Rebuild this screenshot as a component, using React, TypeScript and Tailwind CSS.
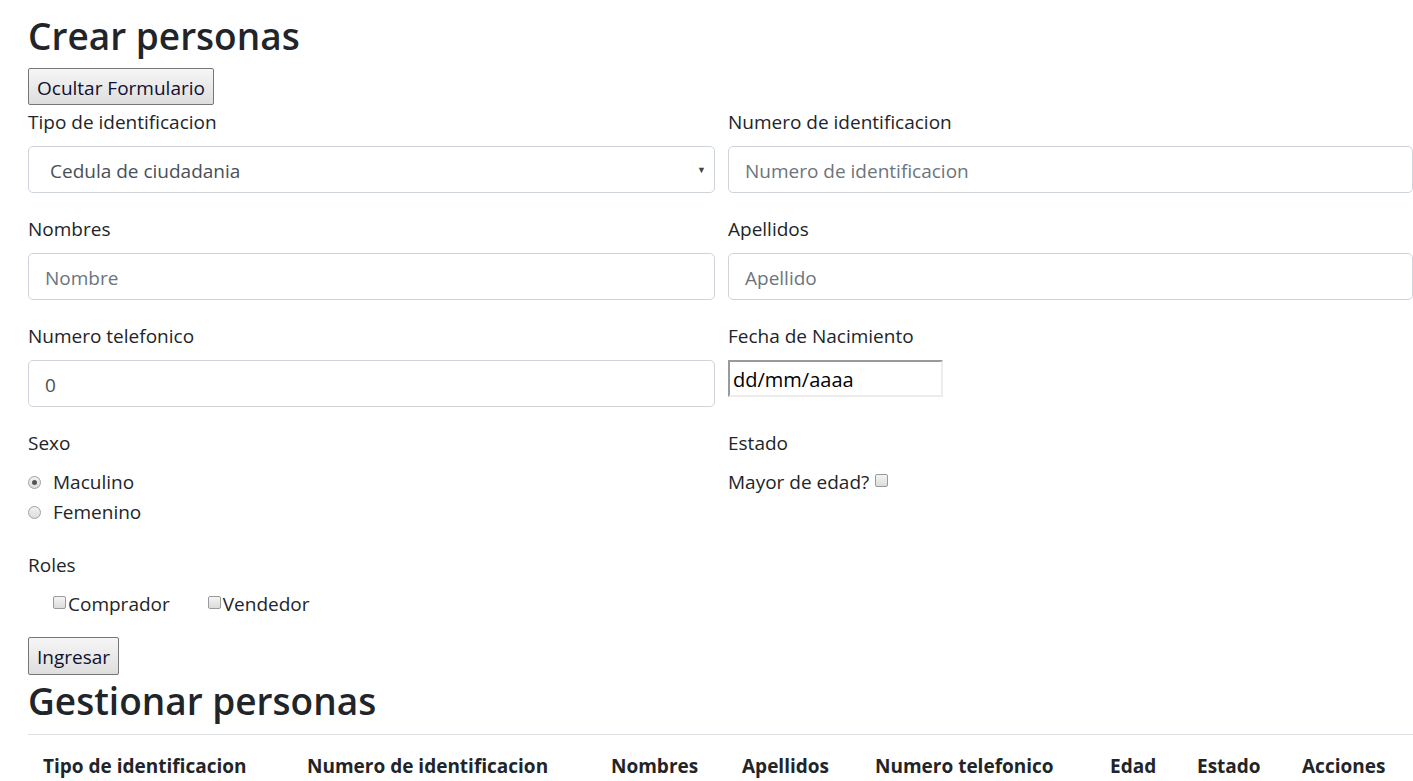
import React from "react";

const font = { fontFamily: '"Open Sans", "Noto Sans", sans-serif' };

const Label = ({ children }: { children: React.ReactNode }) => (
  <div className="h-6 leading-6 text-[19px] text-[#212529] mb-3">{children}</div>
);

const TextBox = ({ children, placeholder }: { children?: React.ReactNode; placeholder?: boolean }) => (
  <div
    className={`h-[47px] border border-[#ced4da] rounded-[5px] bg-white flex items-center pl-4 pt-[3px] text-[19px] ${
      placeholder ? "text-[#6c757d]" : "text-[#495057]"
    }`}
  >
    {children}
  </div>
);

const OldButton = ({ children, tall }: { children: React.ReactNode; tall?: boolean }) => (
  <button
    className={`${
      tall ? "h-[38px]" : "h-[37px]"
    } px-[8px] pt-[3px] border border-[#767676] rounded-[2px] bg-gradient-to-b from-[#f6f6f6] to-[#dedede] text-[19px] text-[#101030] leading-none`}
  >
    {children}
  </button>
);

const Radio = ({ checked }: { checked?: boolean }) => (
  <span className="inline-flex w-[13px] h-[13px] rounded-full border border-[#a0a0a0] bg-gradient-to-b from-[#f2f2f2] to-[#dcdcdc] items-center justify-center mr-[12px]">
    {checked && <span className="w-[5px] h-[5px] rounded-full bg-[#555]" />}
  </span>
);

const Check = () => (
  <span className="inline-block w-[13px] h-[13px] rounded-[2px] border border-[#9a9a9a] bg-gradient-to-b from-[#f4f4f4] to-[#dcdcdc]" />
);

const columns = [
  { name: "Tipo de identificacion", w: 264 },
  { name: "Numero de identificacion", w: 304 },
  { name: "Nombres", w: 131 },
  { name: "Apellidos", w: 133 },
  { name: "Numero telefonico", w: 235 },
  { name: "Edad", w: 87 },
  { name: "Estado", w: 105 },
  { name: "Acciones", w: 126 },
];

export default function App() {
  return (
    <div style={font} className="w-[1413px] h-[781px] overflow-hidden bg-white text-[#212529] pl-[28px] pt-[12px]">
      <h1 className="text-[37px] leading-[48px] font-semibold mb-2">Crear personas</h1>
      <OldButton>Ocultar Formulario</OldButton>

      <div className="grid grid-cols-[687px_685px] gap-x-[13px] mt-[5px]">
        <div className="mb-6">
          <Label>Tipo de identificacion</Label>
          <div className="relative">
            <TextBox>
              <span className="pl-[5px] text-[#495057]">Cedula de ciudadania</span>
            </TextBox>
            <span className="absolute right-[9px] top-[17px] text-[9px] text-[#444]">▼</span>
          </div>
        </div>
        <div className="mb-6">
          <Label>Numero de identificacion</Label>
          <TextBox placeholder>Numero de identificacion</TextBox>
        </div>

        <div className="mb-6">
          <Label>Nombres</Label>
          <TextBox placeholder>Nombre</TextBox>
        </div>
        <div className="mb-6">
          <Label>Apellidos</Label>
          <TextBox placeholder>Apellido</TextBox>
        </div>

        <div className="mb-6">
          <Label>Numero telefonico</Label>
          <TextBox>0</TextBox>
        </div>
        <div className="mb-6">
          <Label>Fecha de Nacimiento</Label>
          <div className="w-[215px] h-[37px] border-2 border-t-[#9a9a9a] border-l-[#9a9a9a] border-b-[#ececec] border-r-[#ececec] flex items-center pl-[3px] pt-[2px] text-[20px] text-black">
            dd/mm/aaaa
          </div>
        </div>

        <div>
          <Label>Sexo</Label>
          <div className="flex flex-col text-[19px] leading-[30px]">
            <div className="flex items-center">
              <Radio checked />
              Maculino
            </div>
            <div className="flex items-center">
              <Radio />
              Femenino
            </div>
          </div>
        </div>
        <div>
          <Label>Estado</Label>
          <div className="flex items-center text-[19px] leading-[30px]">
            Mayor de edad?
            <span className="ml-[6px] -mt-[4px] flex">
              <Check />
            </span>
          </div>
        </div>
      </div>

      <div className="mt-[26px]">
        <Label>Roles</Label>
        <div className="flex items-center text-[19px] leading-[30px] pl-[25px]">
          <span className="flex items-center">
            <span className="-mt-[4px] flex mr-[2px]"><Check /></span>Comprador
          </span>
          <span className="flex items-center ml-[38px]">
            <span className="-mt-[4px] flex mr-[2px]"><Check /></span>Vendedor
          </span>
        </div>
      </div>

      <div className="mt-[18px]">
        <OldButton tall>Ingresar</OldButton>
      </div>

      <h1 className="text-[37px] leading-[48px] font-semibold mt-[2px]">Gestionar personas</h1>
      <div className="mt-[9px] border-t border-[#dee2e6] w-[1385px]" />
      <table className="border-collapse mt-[19px]">
        <thead>
          <tr>
            {columns.map((c) => (
              <th
                key={c.name}
                style={{ width: c.w }}
                className="text-left font-bold text-[19px] px-[15px] leading-6 whitespace-nowrap"
              >
                {c.name}
              </th>
            ))}
          </tr>
        </thead>
      </table>
    </div>
  );
}
